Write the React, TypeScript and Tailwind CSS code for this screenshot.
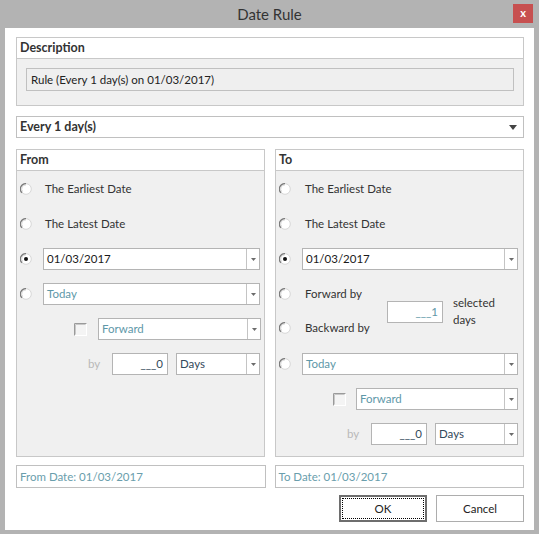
import React from "react";

const F = "font-['Lato',sans-serif]";

function Radio({ checked }: { checked?: boolean }) {
  return (
    <svg width="12" height="12" viewBox="0 0 12 12" className="shrink-0">
      <circle cx="6" cy="6" r="5.3" fill="#ffffff" stroke="#d6d6d6" strokeWidth="1" />
      <path d="M2 9.8 A5.3 5.3 0 0 1 6 0.7" fill="none" stroke="#7a7a7a" strokeWidth="1.2" />
      <path d="M2.6 8.6 A4.2 4.2 0 0 1 6 1.8" fill="none" stroke="#c8c8c8" strokeWidth="0.8" />
      {checked && <circle cx="6" cy="6" r="2" fill="#111111" />}
    </svg>
  );
}

function Check() {
  return (
    <svg width="13" height="13" viewBox="0 0 13 13" className="shrink-0">
      <rect x="0" y="0" width="13" height="13" fill="#ffffff" />
      <rect x="1" y="1" width="11" height="11" fill="#f4f4f4" />
      <path d="M0.5 12.5 V0.5 H12.5" fill="none" stroke="#9a9a9a" strokeWidth="1" />
      <path d="M1.5 11.5 V1.5 H11.5" fill="none" stroke="#c8c8c8" strokeWidth="1" />
    </svg>
  );
}

function Combo({
  text,
  w,
  color = "text-[#222]",
}: {
  text: string;
  w: string;
  color?: string;
}) {
  return (
    <div className={`${w} h-[22px] flex bg-white border border-[#b4b4b4] shrink-0`}>
      <div className={`flex-1 flex items-center pl-[3px] ${color}`}>{text}</div>
      <div className="w-[13px] border-l border-[#c4c4c4] flex items-center justify-center">
        <svg width="5" height="3" viewBox="0 0 5 3">
          <path d="M0 0 H5 L2.5 3 Z" fill="#6b6b6b" />
        </svg>
      </div>
    </div>
  );
}

function NumBox({ text, w, color }: { text: string; w: string; color: string }) {
  return (
    <div
      className={`${w} h-[22px] bg-white border border-[#b4b4b4] flex items-center justify-end pr-[4px] ${color} shrink-0`}
    >
      {text}
    </div>
  );
}

function GroupHeader({ title }: { title: string }) {
  return (
    <div className="h-[21px] bg-white border-b border-[#c8c8c8] flex items-center pl-[3px] text-[12.5px] font-bold text-[#333]">
      {title}
    </div>
  );
}

function RadioRow({ checked, children }: { checked?: boolean; children: React.ReactNode }) {
  return (
    <div className="h-[22px] flex items-center">
      <div className="w-[26px] pl-[3px] flex items-center">
        <Radio checked={checked} />
      </div>
      {children}
    </div>
  );
}

const TEAL = "text-[#5e98a8]";
const DARK = "text-[#33495a]";

export default function App() {
  return (
    <div className={`w-[539px] h-[534px] bg-[#b3b3b3] flex flex-col ${F} text-[#333]`}>
      {/* title bar */}
      <div className="h-[28px] relative flex items-center justify-center">
        <span className="text-[15px] text-[#333] mt-[1px]">Date Rule</span>
        <div className="absolute right-[6px] top-[4px] w-[20px] h-[19px] bg-[#c75050] flex items-center justify-center text-white text-[11px] font-bold leading-none pb-[2px]">
          x
        </div>
      </div>

      {/* client */}
      <div className="mx-[5px] h-[502px] bg-white pl-[11px] pr-[10px] pt-[9px] flex flex-col text-[11.5px]">
        {/* Description */}
        <div className="h-[69px] border border-[#c8c8c8] flex flex-col">
          <GroupHeader title="Description" />
          <div className="flex-1 bg-[#f0f0f0] px-[9px] pt-[9px]">
            <div className="h-[23px] border border-[#c0c0c0] bg-[#efefef] flex items-center pl-[4px] text-[#222]">
              Rule (Every 1 day(s) on 01/03/2017)
            </div>
          </div>
        </div>

        {/* Every dropdown */}
        <div className="mt-[10px] h-[22px] border border-[#c0c0c0] bg-white flex items-center pl-[3px] pr-[3px] text-[12.5px] font-bold text-[#333]">
          <span className="flex-1">Every 1 day(s)</span>
          <svg width="8" height="5" viewBox="0 0 8 5" className="mr-[3px]">
            <path d="M0 0 H8 L4 5 Z" fill="#444" />
          </svg>
        </div>

        {/* From / To */}
        <div className="mt-[11px] h-[308px] flex gap-[10px]">
          {/* From */}
          <div className="w-[249px] border border-[#c8c8c8] flex flex-col">
            <GroupHeader title="From" />
            <div className="flex-1 bg-[#f0f0f0] pt-[7px] flex flex-col gap-[13px] text-[#333]">
              <RadioRow>
                <span className="pl-[2px]">The Earliest Date</span>
              </RadioRow>
              <RadioRow>
                <span className="pl-[2px]">The Latest Date</span>
              </RadioRow>
              <RadioRow checked>
                <Combo text="01/03/2017" w="w-[217px]" color="text-[#1a1a1a]" />
              </RadioRow>
              <RadioRow>
                <Combo text="Today" w="w-[217px]" color={TEAL} />
              </RadioRow>
              <div className="h-[22px] flex items-center">
                <div className="w-[57px]" />
                <Check />
                <div className="w-[11px]" />
                <Combo text="Forward" w="w-[163px]" color={TEAL} />
              </div>
              <div className="h-[22px] flex items-center">
                <span className="pl-[71px] w-[95px] text-[#b9b9b9]">by</span>
                <NumBox text="___0" w="w-[56px]" color={DARK} />
                <div className="w-[8px]" />
                <Combo text="Days" w="w-[84px]" color={DARK} />
              </div>
            </div>
          </div>

          {/* To */}
          <div className="w-[249px] border border-[#c8c8c8] flex flex-col">
            <GroupHeader title="To" />
            <div className="flex-1 bg-[#f0f0f0] pt-[7px] flex flex-col gap-[13px] text-[#333]">
              <RadioRow>
                <span className="pl-[3px]">The Earliest Date</span>
              </RadioRow>
              <RadioRow>
                <span className="pl-[3px]">The Latest Date</span>
              </RadioRow>
              <RadioRow checked>
                <Combo text="01/03/2017" w="w-[216px]" color="text-[#1a1a1a]" />
              </RadioRow>
              <div className="h-[57px] flex">
                <div className="w-[111px] flex flex-col gap-[12px]">
                  <RadioRow>
                    <span className="pl-[3px]">Forward by</span>
                  </RadioRow>
                  <RadioRow>
                    <span className="pl-[3px]">Backward by</span>
                  </RadioRow>
                </div>
                <div className="pt-[18px]">
                  <NumBox text="___1" w="w-[56px]" color={TEAL} />
                </div>
                <div className="pl-[10px] pt-[11px] leading-[17px]">
                  <div>selected</div>
                  <div>days</div>
                </div>
              </div>
              <RadioRow>
                <Combo text="Today" w="w-[216px]" color={TEAL} />
              </RadioRow>
              <div className="h-[22px] flex items-center">
                <div className="w-[57px]" />
                <Check />
                <div className="w-[10px]" />
                <Combo text="Forward" w="w-[162px]" color={TEAL} />
              </div>
              <div className="h-[22px] flex items-center">
                <span className="pl-[71px] w-[95px] text-[#b9b9b9]">by</span>
                <NumBox text="___0" w="w-[56px]" color={DARK} />
                <div className="w-[8px]" />
                <Combo text="Days" w="w-[83px]" color={DARK} />
              </div>
            </div>
          </div>
        </div>

        {/* date summary */}
        <div className="mt-[8px] flex gap-[9px]">
          <div className="w-[250px] h-[23px] border border-[#c0c0c0] flex items-center pl-[3px] text-[#6a9eac]">
            From Date: 01/03/2017
          </div>
          <div className="w-[250px] h-[23px] border border-[#c0c0c0] flex items-center pl-[3px] text-[#6a9eac]">
            To Date: 01/03/2017
          </div>
        </div>

        {/* buttons */}
        <div className="mt-[7px] flex justify-end gap-[9px]">
          <div className="w-[88px] h-[27px] border-2 border-[#6e6e6e] bg-white p-[1px]">
            <div className="w-full h-full border border-dotted border-black flex items-center justify-center text-[#222]">
              OK
            </div>
          </div>
          <div className="w-[88px] h-[27px] border border-[#adadad] bg-white flex items-center justify-center text-[#222]">
            Cancel
          </div>
        </div>
      </div>
    </div>
  );
}
